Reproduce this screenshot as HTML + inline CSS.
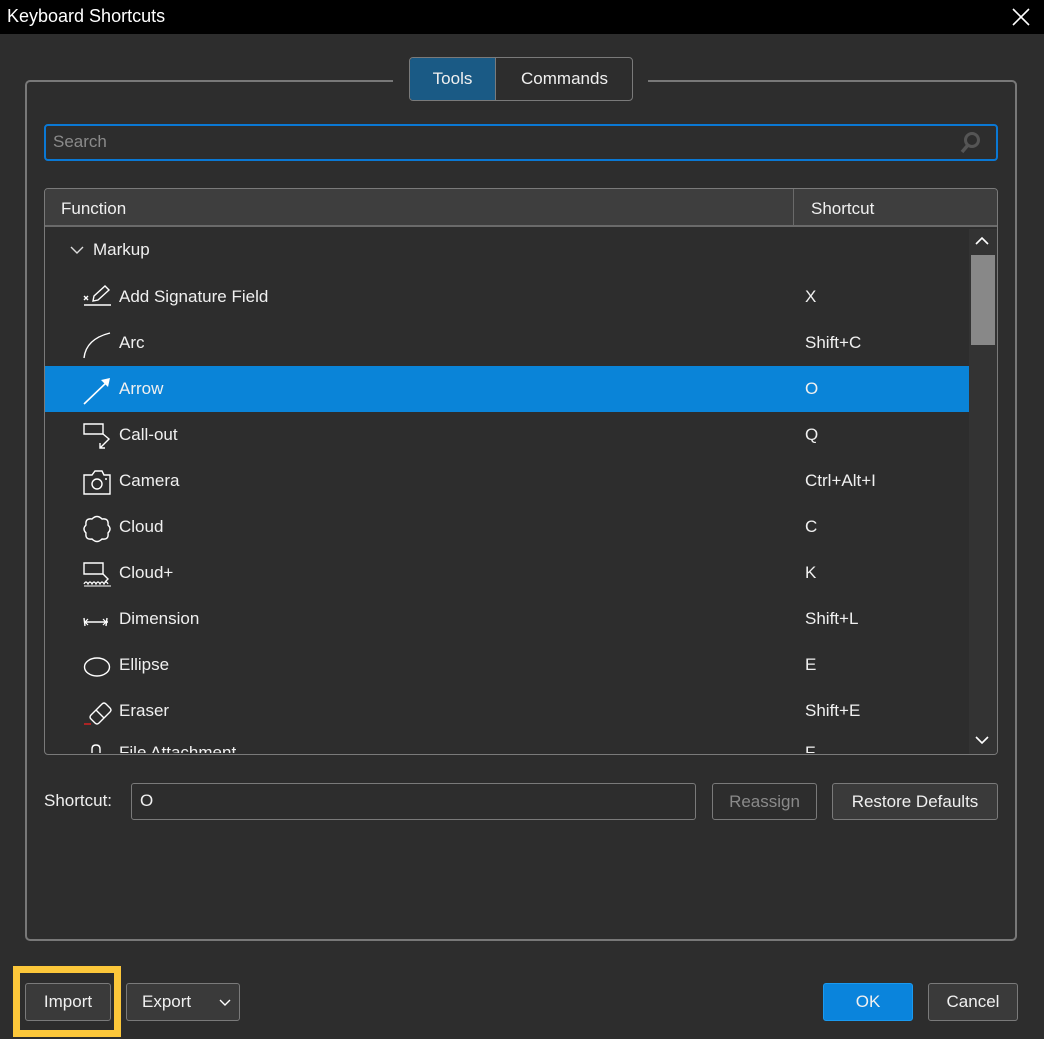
<!DOCTYPE html>
<html><head><meta charset="utf-8"><style>
*{box-sizing:border-box;margin:0;padding:0}
body{width:1044px;height:1039px;background:#2d2d2d;font-family:"Liberation Sans",sans-serif;font-size:17px;color:#f0f0f0;position:relative;overflow:hidden}
.a{position:absolute}
.btn{position:absolute;border:1px solid #7a7a7a;border-radius:3px;background:#3a3a3a;display:flex;align-items:center;justify-content:center;color:#f0f0f0}
.row{position:absolute;left:45px;width:924px;height:46px}
.row .ic{position:absolute;left:38px;top:11px}
.row .t{position:absolute;left:74px;top:13px}
.row .s{position:absolute;left:760px;top:13px}
</style></head><body>
<div class="a" style="left:0;top:0;width:1044px;height:34px;background:#000"></div>
<div class="a" style="left:7px;top:6px;font-size:18px;color:#fff">Keyboard Shortcuts</div>
<svg class="a" style="left:1012px;top:8px" width="18" height="18"><path d="M1 1L17 17M17 1L1 17" stroke="#fff" stroke-width="1.6"/></svg>

<div class="a" style="left:25px;top:80px;width:992px;height:861px;border:2px solid #787878;border-radius:5px"></div>
<div class="a" style="left:393px;top:70px;width:255px;height:20px;background:#2d2d2d"></div>
<div class="a" style="left:409px;top:57px;width:224px;height:44px;border:1px solid #7a7a7a;border-radius:4px;background:#2d2d2d;overflow:hidden">
 <div class="a" style="left:0;top:0;width:86px;height:42px;background:#1a5a85;border-right:1px solid #7a7a7a;display:flex;align-items:center;justify-content:center">Tools</div>
 <div class="a" style="left:86px;top:0;width:137px;height:42px;display:flex;align-items:center;justify-content:center">Commands</div>
</div>

<div class="a" style="left:44px;top:124px;width:954px;height:37px;border:2px solid #0a78d4;border-radius:4px"></div>
<div class="a" style="left:53px;top:132px;color:#8a8a8a">Search</div>
<svg class="a" style="left:958px;top:131px" width="24" height="24"><circle cx="14" cy="9" r="6.5" fill="none" stroke="#555" stroke-width="3"/><path d="M10 14L4 21" stroke="#555" stroke-width="3.5"/></svg>

<div class="a" style="left:44px;top:188px;width:954px;height:567px;border:1px solid #7a7a7a;border-radius:4px;overflow:hidden;background:#2d2d2d">
 <div class="a" style="left:0;top:0;width:954px;height:38px;background:#3e3e3e;border-bottom:2px solid #6a6a6a"></div>
 <div class="a" style="left:748px;top:0;width:1px;height:38px;background:#6a6a6a"></div>
 <div class="a" style="left:16px;top:10px">Function</div>
 <div class="a" style="left:766px;top:10px">Shortcut</div>
 <div class="a" style="left:924px;top:40px;width:29px;height:526px;background:#333"></div>
 <div class="a" style="left:926px;top:66px;width:24px;height:90px;background:#888"></div>
 <svg class="a" style="left:929px;top:46px" width="16" height="12"><path d="M2 9L8 3L14 9" stroke="#fff" stroke-width="1.6" fill="none"/></svg>
 <svg class="a" style="left:929px;top:545px" width="16" height="12"><path d="M2 3L8 9L14 3" stroke="#fff" stroke-width="1.6" fill="none"/></svg>
</div>

<svg class="a" style="left:70px;top:245px" width="14" height="10"><path d="M1 2L7 8L13 2" stroke="#ddd" stroke-width="1.4" fill="none"/></svg>
<div class="a" style="left:93px;top:240px">Markup</div>

<div class="row" style="top:274px"><svg class="ic" width="30" height="24"><path d="M1 11L5 15M5 11L1 15" stroke="#fff" stroke-width="1.4"/><path d="M10 16L11 11L22 1L26 5L15 15Z" stroke="#fff" stroke-width="1.4" fill="none"/><path d="M1 20H28" stroke="#fff" stroke-width="1.4"/></svg><span class="t">Add Signature Field</span><span class="s">X</span></div>
<div class="row" style="top:320px"><svg class="ic" width="30" height="28"><path d="M1 27Q3 8 27 2" stroke="#fff" stroke-width="1.4" fill="none"/></svg><span class="t">Arc</span><span class="s">Shift+C</span></div>
<div class="row" style="top:366px;background:#0a84d8"><svg class="ic" width="30" height="28"><path d="M1 27L25 4" stroke="#fff" stroke-width="1.6"/><path d="M18 3L27 1L25 10Z" fill="#fff"/></svg><span class="t">Arrow</span><span class="s">O</span></div>
<div class="row" style="top:412px"><svg class="ic" width="30" height="28"><path d="M1 1H20V11H1Z" stroke="#fff" stroke-width="1.4" fill="none"/><path d="M20 11L26 16L17 25M17 20V25H22" stroke="#fff" stroke-width="1.4" fill="none"/></svg><span class="t">Call-out</span><span class="s">Q</span></div>
<div class="row" style="top:458px"><svg class="ic" width="30" height="28"><path d="M1 6H9L12 2H19L21 6H27V25H1Z" stroke="#fff" stroke-width="1.4" fill="none"/><circle cx="14" cy="15" r="5" stroke="#fff" stroke-width="1.4" fill="none"/><circle cx="23" cy="10" r="1" fill="#fff"/></svg><span class="t">Camera</span><span class="s">Ctrl+Alt+I</span></div>
<div class="row" style="top:504px"><svg class="ic" width="30" height="28"><path d="M9 4Q14 -1 19 4Q26 3 25 10Q29 14 25 18Q26 25 19 24Q14 29 9 24Q2 25 3 18Q-1 14 3 10Q2 3 9 4Z" stroke="#fff" stroke-width="1.4" fill="none"/></svg><span class="t">Cloud</span><span class="s">C</span></div>
<div class="row" style="top:550px"><svg class="ic" width="30" height="28"><path d="M1 2H20V13H1Z" stroke="#fff" stroke-width="1.4" fill="none"/><path d="M20 13L25 18L22 21" stroke="#fff" stroke-width="1.4" fill="none"/><path d="M1 23Q3 19 5 23Q7 19 9 23Q11 19 13 23Q15 19 17 23Q19 19 21 23Q23 19 25 23" stroke="#fff" stroke-width="1.2" fill="none"/><path d="M1 25H28" stroke="#fff" stroke-width="1"/></svg><span class="t">Cloud+</span><span class="s">K</span></div>
<div class="row" style="top:596px"><svg class="ic" width="30" height="28"><path d="M1 11L2 19M2 15H25M24 11L23 19" stroke="#fff" stroke-width="1.4" fill="none"/><path d="M5 12L2 15L5 18M20 12L23 15L20 18" stroke="#fff" stroke-width="1.2" fill="none"/></svg><span class="t">Dimension</span><span class="s">Shift+L</span></div>
<div class="row" style="top:642px"><svg class="ic" width="30" height="28"><ellipse cx="14" cy="14" rx="12.5" ry="9" stroke="#fff" stroke-width="1.4" fill="none"/></svg><span class="t">Ellipse</span><span class="s">E</span></div>
<div class="row" style="top:688px"><svg class="ic" width="30" height="28"><path d="M8 16L19 5Q21 3 23 5L27 9Q29 11 27 13L16 24Q14 26 12 24L8 20Q6 18 8 16ZM13 11L21 19" stroke="#fff" stroke-width="1.4" fill="none"/><path d="M1 25H8" stroke="#e02020" stroke-width="1.4"/></svg><span class="t">Eraser</span><span class="s">Shift+E</span></div>
<div class="a" style="left:45px;top:734px;width:924px;height:19px;overflow:hidden"><svg class="a" style="left:44px;top:10px" width="20" height="14"><path d="M3 14V5Q3 1 7 1Q11 1 11 5V14" stroke="#fff" stroke-width="1.4" fill="none"/></svg><span class="a" style="left:74px;top:9px">File Attachment</span><span class="a" style="left:760px;top:9px">F</span></div>

<div class="a" style="left:44px;top:791px">Shortcut:</div>
<div class="a" style="left:131px;top:783px;width:565px;height:37px;border:1px solid #7a7a7a;border-radius:3px"></div>
<div class="a" style="left:140px;top:791px">O</div>
<div class="btn" style="left:712px;top:783px;width:105px;height:37px;background:#2d2d2d;color:#8a8a8a">Reassign</div>
<div class="btn" style="left:832px;top:783px;width:166px;height:37px">Restore Defaults</div>

<div class="a" style="left:13px;top:966px;width:108px;height:71px;border:7px solid #fcc73a"></div>
<div class="btn" style="left:25px;top:983px;width:86px;height:38px">Import</div>
<div class="btn" style="left:126px;top:983px;width:114px;height:38px;justify-content:flex-start;padding-left:15px">Export<svg class="a" style="left:92px;top:14px" width="12" height="9"><path d="M1 2L6 7L11 2" stroke="#fff" stroke-width="1.4" fill="none"/></svg></div>
<div class="btn" style="left:823px;top:983px;width:90px;height:38px;background:#0a84dc;border-color:#1a9af0">OK</div>
<div class="btn" style="left:928px;top:983px;width:90px;height:38px">Cancel</div>
</body></html>
